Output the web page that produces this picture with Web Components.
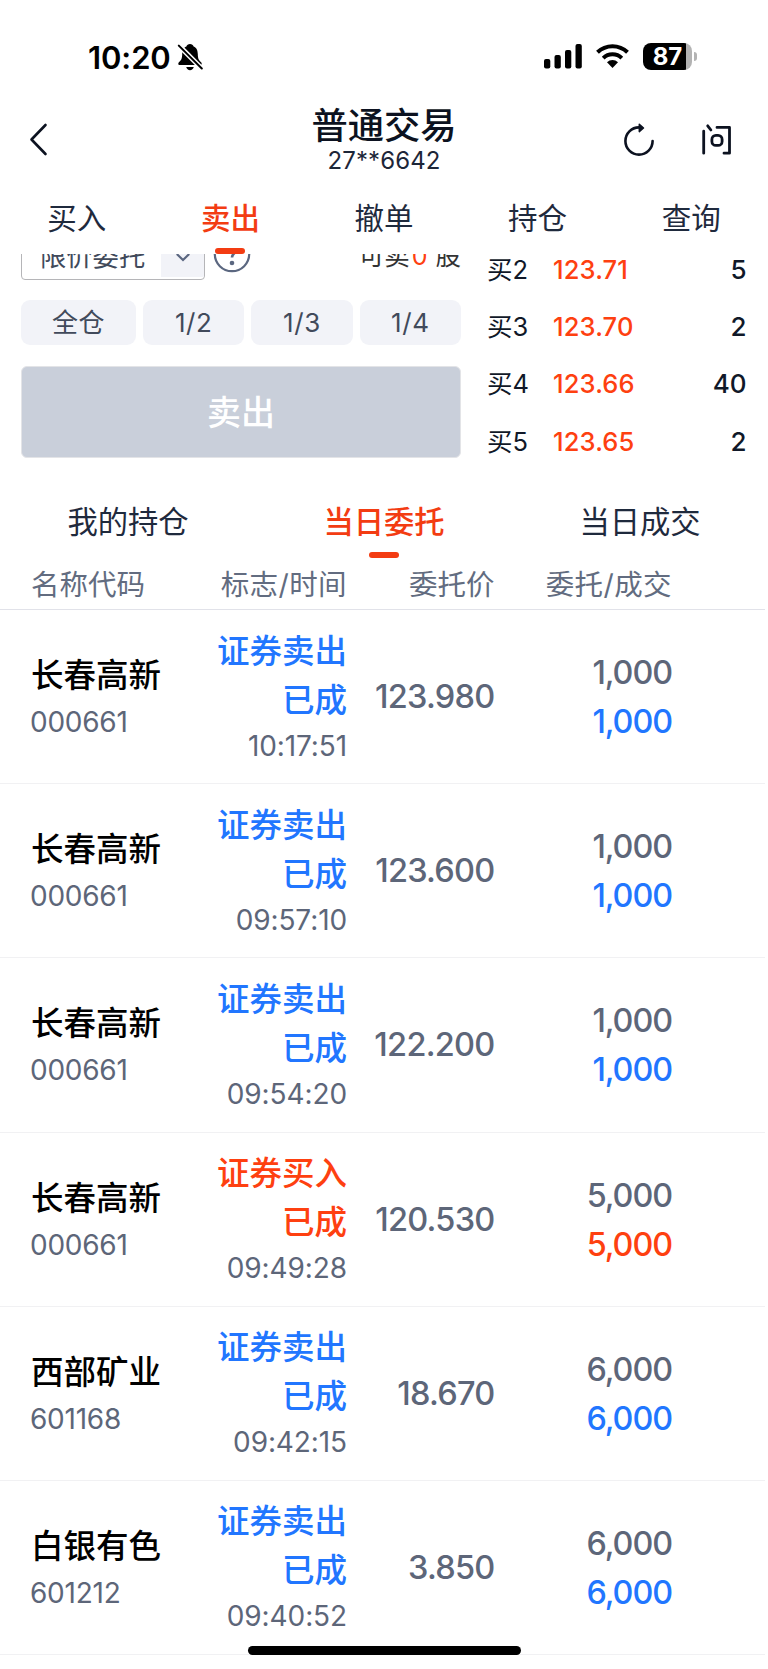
<!DOCTYPE html>
<html lang="zh-CN">
<head>
<meta charset="utf-8">
<meta name="viewport" content="width=device-width">
<title>普通交易</title>
<style>
html,body{margin:0;padding:0;background:#fff}
body{width:768px;height:1669px;overflow:hidden;font-family:Inter,"Noto Sans CJK SC",sans-serif;color:#1d2638}
</style>
</head>
<body>
<trade-app></trade-app>
<script>
const define = (name, html) => customElements.define(name, class extends HTMLElement {
  constructor() {
    super();
    this.attachShadow({mode: 'open'}).innerHTML = typeof html === 'function' ? '' : html;
  }
  connectedCallback() {
    if (typeof html === 'function') this.shadowRoot.innerHTML = html(k => this.getAttribute(k) || '');
  }
});

define('status-bar', `<style>
:host{display:flex;height:92px;box-sizing:border-box;padding:0 71px 0 88px;align-items:flex-start;color:#000}
.time{font-size:31px;font-weight:600;line-height:40px;margin-top:37.500px;width:84px;white-space:nowrap;letter-spacing:-.1px}
svg{display:block}
.bell{margin:43px 0 0 5px}
.right{margin-left:auto;display:flex;padding-top:43px}
.bat{display:flex;align-items:center;margin-left:13px}
.body{width:49px;height:27px;border-radius:8px;background:linear-gradient(90deg,#000 43.5px,#b3b3b3 43.5px);color:#fff;font-size:24px;font-weight:700;line-height:27px;text-align:center}
.nub{width:3px;height:9px;border-radius:0 4px 4px 0;background:#b3b3b3;margin-left:2px}
</style>
<div class="time">10:20</div>
<svg class="bell" width="26" height="28" viewBox="0 0 26 28"><path d="M13 1c-1.800 0-3.200.9-3.600 2.400C6.200 4.600 5.300 7.800 5.200 11c-.1 5-1 6-3.300 8.300-.8.8-1 2.700.6 2.700h21c1.600 0 1.400-1.900.6-2.700-2.300-2.300-3.200-3.300-3.300-8.300-.1-3.200-1-6.400-4.200-7.600C16.200 1.900 14.800 1 13 1zM9.200 24h7.600c-.5 2-2 3.200-3.800 3.200S9.700 26 9.200 24z"/><path d="M1.800 2.600l23 22.900" stroke="#fff" stroke-width="5"/><path d="M1.800 2.600l23 22.900" stroke="#000" stroke-width="2" stroke-linecap="round"/></svg>
<div class="right">
<svg width="38" height="26" viewBox="0 0 38 26"><rect y="16" width="6.300" height="9.500" rx="2"/><rect x="10.500" y="12" width="6.300" height="13.500" rx="2"/><rect x="21" y="7" width="6.300" height="18.500" rx="2"/><rect x="31.500" y="1" width="6.300" height="24.500" rx="2"/></svg>
<svg style="margin-left:13px" width="35" height="26" viewBox="0 0 35 26"><path d="M2.500 9.300a21.500 21.500 0 0 1 30 0M8.200 15.100a13.300 13.300 0 0 1 18.600 0" fill="none" stroke="#000" stroke-width="4"/><path d="M12 19.200a8 8 0 0 1 11 0L17.500 25z"/></svg>
<div class="bat"><div class="body">87</div><div class="nub"></div></div>
</div>`);

define('nav-header', `<style>
:host{display:grid;grid-template-columns:150px 1fr 150px;height:98px;color:#0c1220}
svg{display:block;fill:none;stroke:currentColor;stroke-linecap:round;stroke-linejoin:round;flex:none}
.back{padding:30px 0 0 27.500px}
.mid{text-align:center}
.t{font-size:36.300px;line-height:44px;font-weight:500;margin-top:12px}
.s{font-size:24px;line-height:28px;margin-top:-1px;color:#1d2638;letter-spacing:.1px}
.act{display:flex;padding:29px 0 0 4px;gap:39px}
</style>
<div class="back"><svg width="22" height="36" viewBox="0 0 22 36" stroke-width="2.600"><path d="M17.500 3L3.500 17.500 17.500 32"/></svg></div>
<div class="mid"><div class="t"><slot name="title"></slot></div><div class="s"><slot name="account"></slot></div></div>
<div class="act">
<svg width="36" height="36" viewBox="0 0 36 36" stroke-width="2.600"><path d="M30.600 20a13.600 13.600 0 1 1-13.600-13.600h2"/><path d="M17.300 3.200l4.200 3.800-4.200 3.600z" fill="currentColor" stroke-width="1.500"/></svg>
<svg width="36" height="36" viewBox="0 0 36 36" stroke-width="2.800"><path d="M6.700 10.200v22M10.700 4.800l3.200 4.200M20 6.400H32.500V32.200h-5.500"/><rect x="14.900" y="14.400" width="10.200" height="10" rx="4"/></svg>
</div>`);

define('tab-item', a => `<style>
:host{display:flex;flex-direction:column;align-items:center;flex:1 1 0;font-size:${a('size')||29.5}px;line-height:40px;color:${a('on') ? '#f33c12' : '#1f2a3d'};font-weight:${a('on') ? 500 : 400};white-space:nowrap}
i{display:${a('on') ? 'block' : 'none'};width:30px;height:6px;border-radius:3px;background:#f33c12;margin-top:${a('drop')}px}
</style><span><slot></slot></span><i></i>`);

define('tab-strip', `<style>:host{display:flex;position:relative;z-index:2}</style><slot></slot>`);

define('frac-chip', `<style>:host{display:block;height:45px;line-height:45px;border-radius:9px;background:#f2f3f8;color:#414a5b;font-size:26px;text-align:center;letter-spacing:.6px}</style><slot></slot>`);

define('order-form', `<style>
:host{display:block;width:440px;margin-left:21px}
.top{display:flex;height:52px;margin-top:-26px;align-items:flex-start}
.sel{box-sizing:border-box;width:184px;height:51.500px;border:1.500px solid #b5b5b8;border-radius:4px;display:flex;font-size:26.300px;line-height:26px;color:#414a5b}
.sel span{flex:1;padding:14.500px 0 0 18px;white-space:nowrap}
.sel b{width:43px;background:#f2f3f8;margin:0 0 2px;display:flex;justify-content:center}
svg{display:block}
.q{margin:6px 0 0 7px}
.can{margin-left:auto;font-size:25.500px;line-height:26px;color:#333;padding-top:15px;white-space:nowrap}
.can em{font-style:normal;color:#fe4010;margin:0 8px 0 2px;font-size:25px}
.chips{display:grid;grid-template-columns:115px 101.300px 101.300px 101.300px;justify-content:space-between;margin-top:20px}
.sell{box-sizing:border-box;height:92px;margin-top:20.500px;border:1.500px solid #e3e4e7;border-radius:6px;background:#c9cfda;color:#fff;font-weight:500;font-size:34px;line-height:91px;text-align:center}
</style>
<div class="top">
<div class="sel"><span>限价委托</span><b><svg width="16" height="50" viewBox="0 0 16 50"><path d="M1.800 25l6.200 6 6.200-6" fill="none" stroke="#5b6780" stroke-width="2.200"/></svg></b></div>
<svg class="q" width="40" height="40" viewBox="0 0 40 40"><circle cx="20" cy="20" r="17.200" fill="none" stroke="#5b6780" stroke-width="2.200"/><path d="M15 16c0-7 10-6.500 10-1 0 4-5 4-5 8.500" fill="none" stroke="#5b6780" stroke-width="2.600"/><circle cx="20" cy="29" r="2.300" fill="#5b6780"/></svg>
<div class="can">可卖<em>0</em>股</div>
</div>
<div class="chips"><frac-chip>全仓</frac-chip><frac-chip>1/2</frac-chip><frac-chip>1/3</frac-chip><frac-chip>1/4</frac-chip></div>
<div class="sell">卖出</div>`);

define('quote-row', a => `<style>
:host{display:grid;grid-template-columns:66px 1fr auto;height:57.400px;line-height:57.400px;font-size:25.500px;color:#101828;white-space:nowrap}
.p{color:#fe4010;font-weight:500;letter-spacing:.15px}.q{font-weight:500;font-size:26px}
</style><span>${a('level')}</span><span class="p">${a('price')}</span><span class="q">${a('qty')}</span>`);

define('trade-panel', `<style>
:host{display:flex;height:242px;overflow:hidden}
.book{width:259.500px;margin:-13.500px 0 0 26px}
</style><order-form></order-form><div class="book"><slot></slot></div>`);

define('orders-head', `<style>
:host{display:grid;grid-template-columns:150px 166px 147.500px 177.500px;padding:0 0 0 31px;margin-right:3px;height:51px;line-height:51px;font-size:28.500px;color:#626c80;border-bottom:1.500px solid #e1e2e9;box-sizing:border-box;white-space:nowrap}
span+span{text-align:right}
.w{letter-spacing:.4px}
</style><span>名称代码</span><span class="w">标志/时间</span><span>委托价</span><span class="w">委托/成交</span>`);

define('order-row', a => `<style>
:host{display:grid;grid-template-columns:150px 166px 147.500px 177.500px;padding:0 0 0 31px;margin-right:3px;height:174.200px;border-bottom:1.500px solid #f1f1f3;box-sizing:border-box;color:#5d6679;white-space:nowrap}
div+div{text-align:right}
.n{font-size:32.500px;line-height:48px;font-weight:500;color:#000;padding-top:42px}
.c{font-size:28px;line-height:46px;letter-spacing:-.25px;margin:-1px 0 0 -1px}
.k{color:${a('side') === 'buy' ? '#fe4010' : '#2176ff'}}
.f{font-size:32.500px;line-height:49px;font-weight:500}
.f:first-child{padding-top:16.500px}
.t{font-size:28px;line-height:43px;letter-spacing:-.1px}
.p{font-size:32.500px;line-height:174px;font-weight:450;letter-spacing:-.75px}
.a{font-size:32.300px;line-height:49px;font-weight:450;letter-spacing:-1.050px}
.a:first-child{padding-top:38px}.a.k{font-weight:500}
</style>
<div><div class="n">${a('name')}</div><div class="c" style="text-align:left">${a('code')}</div></div>
<div><div class="f k">${a('side') === 'buy' ? '证券买入' : '证券卖出'}</div><div class="f k">已成</div><div class="t">${a('time')}</div></div>
<div class="p">${a('price')}</div>
<div><div class="a">${a('amount')}</div><div class="a k">${a('amount')}</div></div>`);

define('home-indicator', `<style>:host{position:absolute;left:247.500px;top:1646px;width:273.500px;height:8.500px;border-radius:5px;background:#000}</style>`);

define('trade-app', `<style>
:host{display:flex;flex-direction:column;position:relative;width:768px;height:1669px;overflow:hidden;background:#fff}
.main{height:64px;padding-top:8px;box-sizing:border-box}
.sub{height:63px;padding-top:6px;box-sizing:border-box}
</style>
<status-bar></status-bar>
<nav-header><span slot="title">普通交易</span><span slot="account">27**6642</span></nav-header>
<tab-strip class="main"><tab-item>买入</tab-item><tab-item on="1" drop="10">卖出</tab-item><tab-item>撤单</tab-item><tab-item>持仓</tab-item><tab-item>查询</tab-item></tab-strip>
<trade-panel><quote-row level="买2" price="123.71" qty="5"></quote-row><quote-row level="买3" price="123.70" qty="2"></quote-row><quote-row level="买4" price="123.66" qty="40"></quote-row><quote-row level="买5" price="123.65" qty="2"></quote-row></trade-panel>
<tab-strip class="sub"><tab-item size="30.300">我的持仓</tab-item><tab-item size="30.300" on="1" drop="10">当日委托</tab-item><tab-item size="30.300">当日成交</tab-item></tab-strip>
<orders-head></orders-head>
<order-row name="长春高新" code="000661" side="sell" time="10:17:51" price="123.980" amount="1,000"></order-row>
<order-row name="长春高新" code="000661" side="sell" time="09:57:10" price="123.600" amount="1,000"></order-row>
<order-row name="长春高新" code="000661" side="sell" time="09:54:20" price="122.200" amount="1,000"></order-row>
<order-row name="长春高新" code="000661" side="buy" time="09:49:28" price="120.530" amount="5,000"></order-row>
<order-row name="西部矿业" code="601168" side="sell" time="09:42:15" price="18.670" amount="6,000"></order-row>
<order-row name="白银有色" code="601212" side="sell" time="09:40:52" price="3.850" amount="6,000"></order-row>
<home-indicator></home-indicator>`);
</script>
</body>
</html>
